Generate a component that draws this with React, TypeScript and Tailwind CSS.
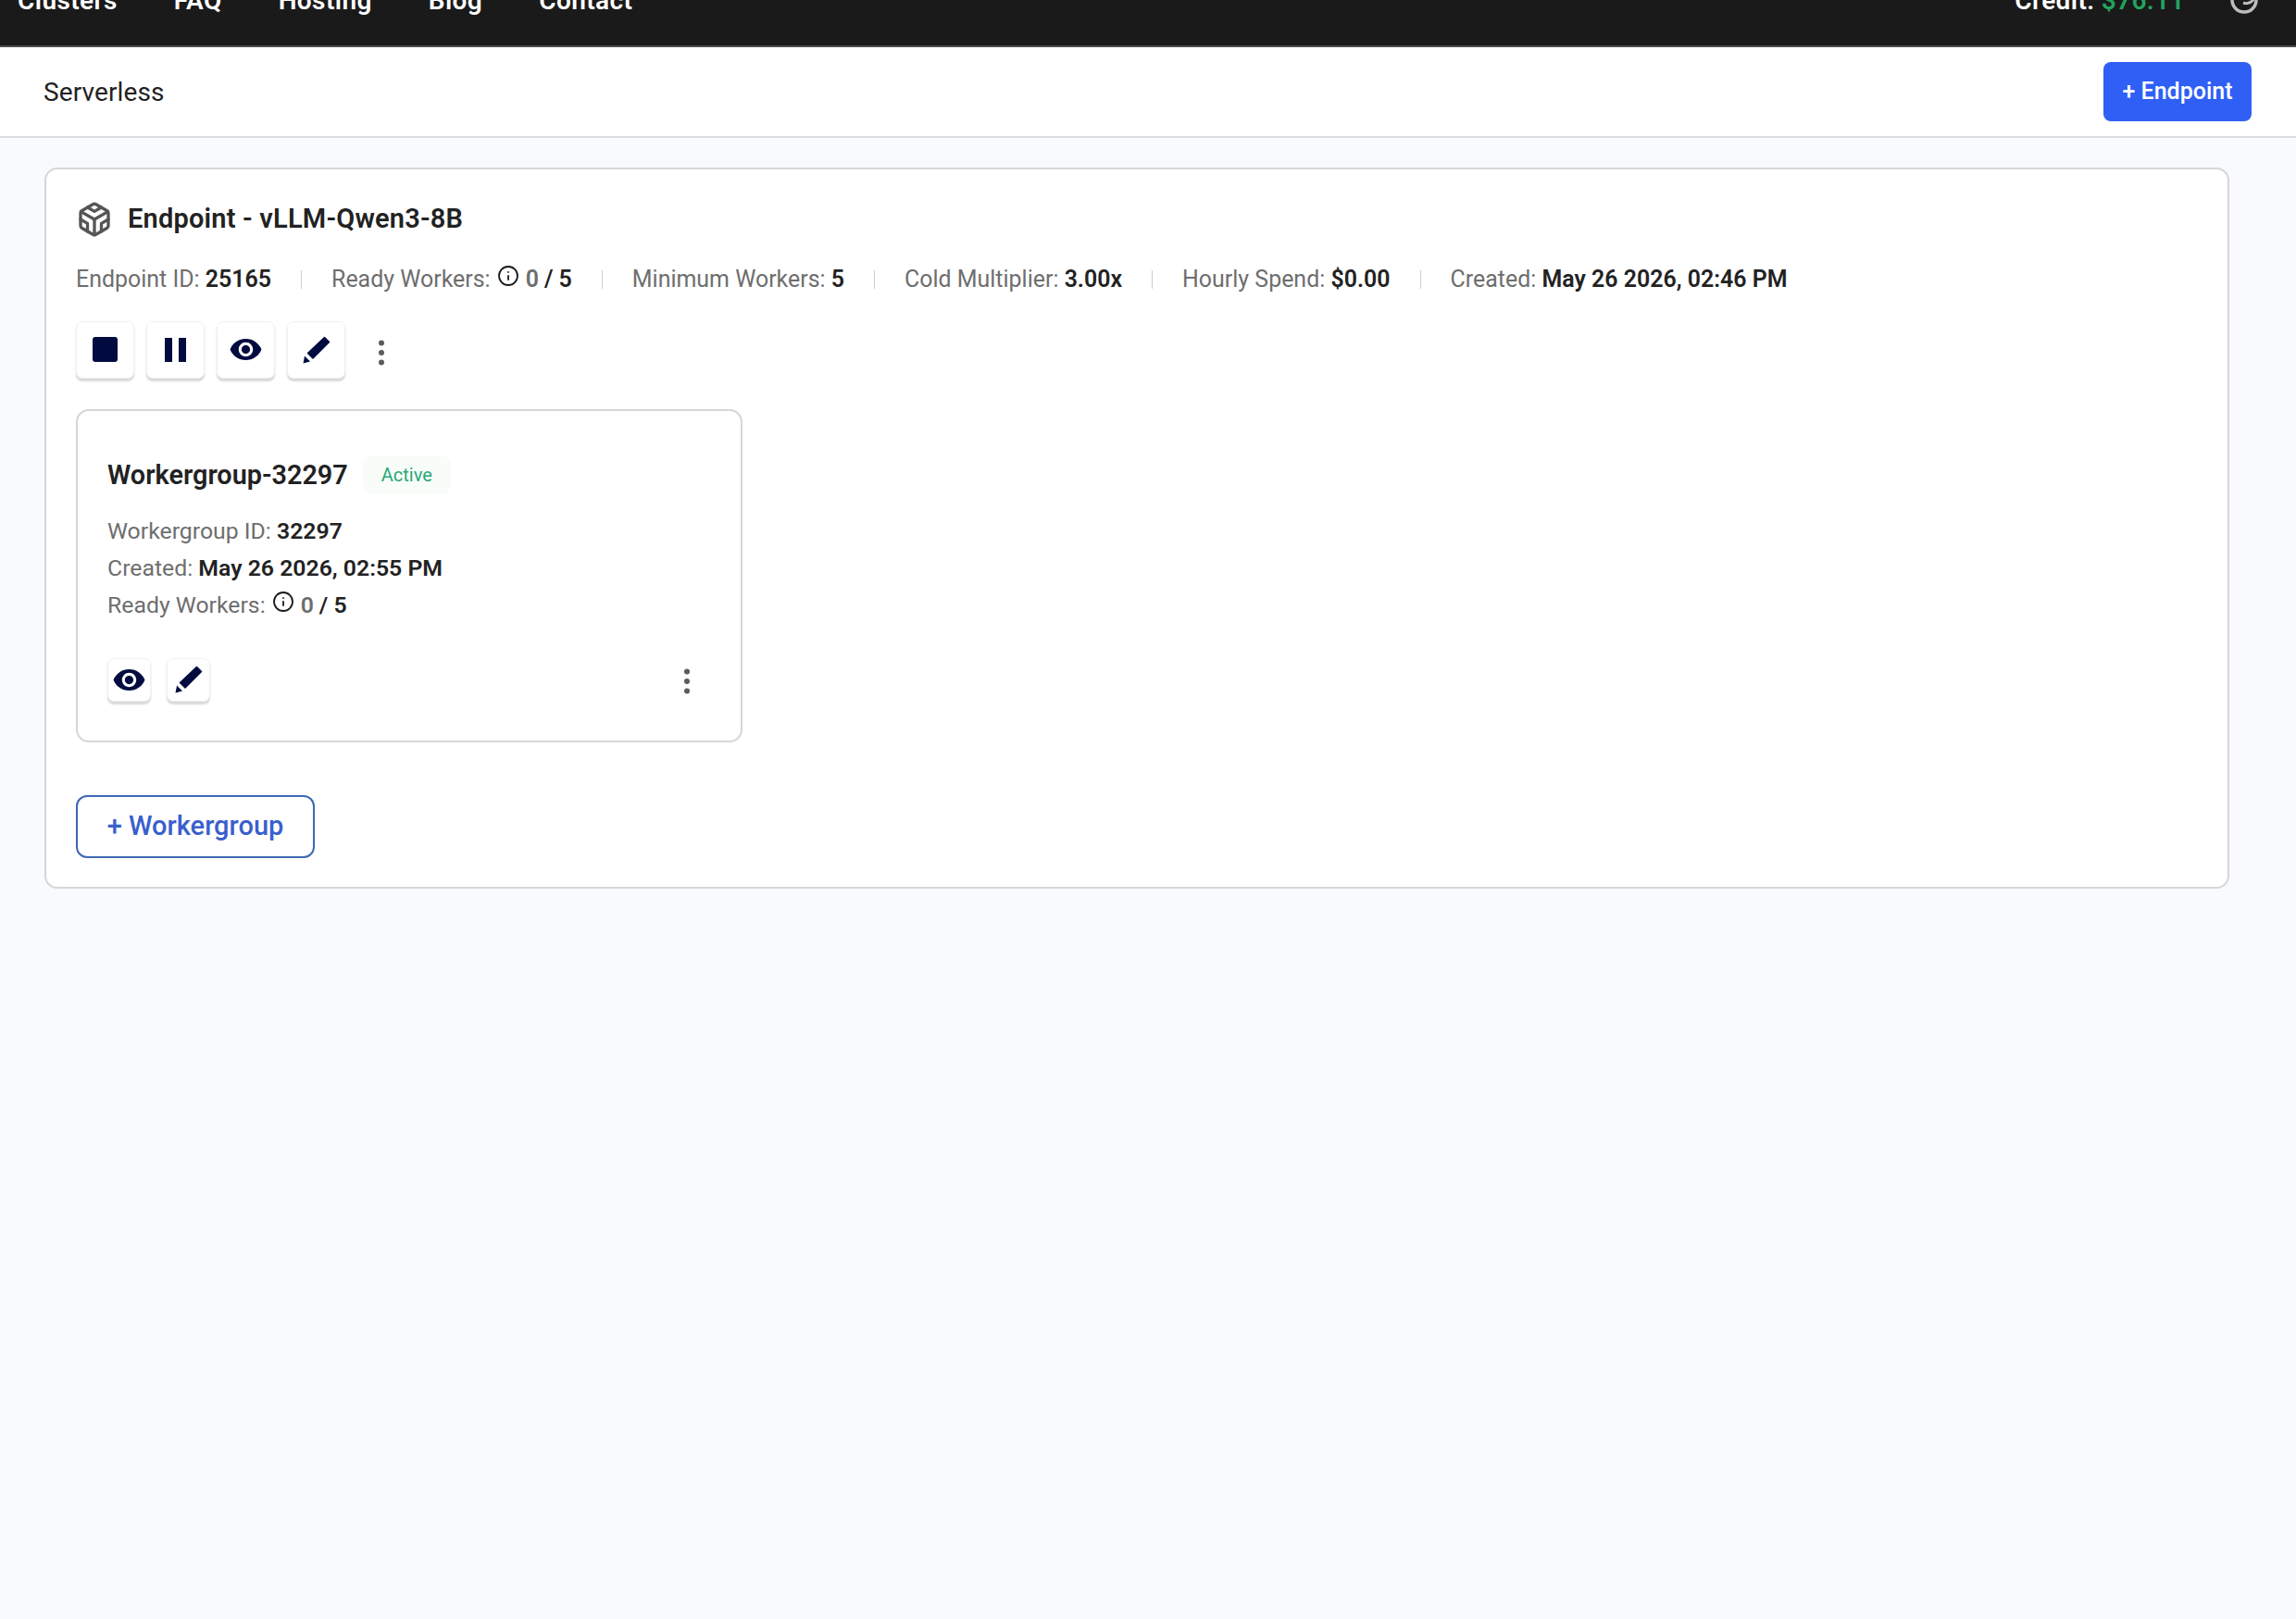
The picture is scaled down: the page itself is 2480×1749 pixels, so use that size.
import { Codesandbox, Info } from "lucide-react";
import { MdVisibility } from "react-icons/md";

const NAV = ["Clusters", "FAQ", "Hosting", "Blog", "Contact"];

function PencilIcon() {
  return (
    <svg width="30" height="30" viewBox="0 0 30 30" aria-hidden="true">
      <path d="M23.5 1.5 L28.5 6.5 L11 24 L5.5 18.5 Z" fill="#020b3f" stroke="#020b3f" strokeWidth="1.5" strokeLinejoin="round" />
      <path d="M2 21.5 L8 27.5 L0.5 29.5 Z" fill="#020b3f" />
    </svg>
  );
}

function Kebab({ className = "" }: { className?: string }) {
  return (
    <svg width="8" height="28" viewBox="0 0 8 28" className={className} aria-hidden="true">
      <circle cx="4" cy="3.5" r="3" fill="#5c5c5c" />
      <circle cx="4" cy="14" r="3" fill="#5c5c5c" />
      <circle cx="4" cy="24.5" r="3" fill="#5c5c5c" />
    </svg>
  );
}

function IconButton({ small, children }: { small?: boolean; children: React.ReactNode }) {
  return (
    <button
      type="button"
      className={`flex items-center justify-center rounded-[7px] border border-[#f0f0f0] bg-white shadow-[0_3px_2px_#d9d9d9] ${
        small ? "h-[47px] w-[47px]" : "h-[62px] w-[63px]"
      }`}
    >
      {children}
    </button>
  );
}

function Stat({ label, value }: { label: string; value: string }) {
  return (
    <span className="text-[#6e6e6e]">
      {label} <b className="font-semibold text-[#222222]">{value}</b>
    </span>
  );
}

function ReadyWorkers() {
  return (
    <span className="flex items-center text-[#6e6e6e]">
      Ready Workers:
      <Info size={24} strokeWidth={1.8} color="#1a1a1a" className="mb-[8px] ml-[7px] mr-[7px]" />
      <b className="font-semibold">0</b>
      <b className="ml-[6px] font-semibold text-[#222222]">/ 5</b>
    </span>
  );
}

export default function App() {
  return (
    <div className="flex min-h-[1749px] flex-col bg-[#f9fafb] font-['Roboto',sans-serif] text-[#222222]">
      <header className="h-[51px] overflow-hidden border-b-2 border-[#4a4a4a] bg-[#1a1a1a]">
        <div className="-mt-[19px] flex h-[40px] items-center justify-between pl-[19px] pr-[41px] text-[28px] font-semibold tracking-[0.4px] text-white">
          <nav className="flex gap-[61px]">
            {NAV.map((item) => (
              <a key={item}>{item}</a>
            ))}
          </nav>
          <div className="flex items-center gap-[49px]">
            <span>
              Credit: <span className="text-[#22a45d]">$76.11</span>
            </span>
            <svg width="30" height="30" viewBox="0 0 30 30" className="-mt-[2px]" aria-hidden="true">
              <circle cx="15" cy="15" r="13" stroke="#bdbdbd" strokeWidth="3.5" fill="none" />
              <path d="M14 18 A 9 9 0 0 0 26 12" stroke="#bdbdbd" strokeWidth="3" fill="none" />
            </svg>
          </div>
        </div>
      </header>

      <div className="flex h-[98px] items-center justify-between border-b-2 border-[#dcdcdc] bg-white pl-[47px] pr-[48px]">
        <h1 className="mt-[2px] text-[28px] font-normal tracking-[0.1px]">Serverless</h1>
        <button
          type="button"
          className="flex h-[64px] w-[160px] items-center justify-center rounded-[8px] bg-[#2f5ff5] text-[25px] font-medium text-white"
        >
          + Endpoint
        </button>
      </div>

      <main className="px-[48px] pt-[32px]">
        <section className="mr-[24px] flex h-[779px] flex-col rounded-[14px] border-2 border-[#d4d6d8] bg-white px-[32px]">
          <div className="mt-[32px] flex items-center gap-[16px]">
            <Codesandbox size={40} strokeWidth={2} color="#555555" />
            <h2 className="text-[29px] font-semibold tracking-[0.2px]">Endpoint - vLLM-Qwen3-8B</h2>
          </div>

          <div className="mt-[25px] flex h-[36px] items-center gap-[32px] text-[24.95px]">
            <Stat label="Endpoint ID:" value="25165" />
            <span className="h-[20px] w-px bg-[#cfcfcf]" />
            <ReadyWorkers />
            <span className="h-[20px] w-px bg-[#cfcfcf]" />
            <Stat label="Minimum Workers:" value="5" />
            <span className="h-[20px] w-px bg-[#cfcfcf]" />
            <Stat label="Cold Multiplier:" value="3.00x" />
            <span className="h-[20px] w-px bg-[#cfcfcf]" />
            <Stat label="Hourly Spend:" value="$0.00" />
            <span className="h-[20px] w-px bg-[#cfcfcf]" />
            <Stat label="Created:" value="May 26 2026, 02:46 PM" />
          </div>

          <div className="mt-[27px] flex items-center gap-[13px]">
            <IconButton>
              <span className="h-[27px] w-[27px] rounded-[3px] bg-[#020b3f]" />
            </IconButton>
            <IconButton>
              <span className="flex gap-[7px]">
                <span className="h-[26px] w-[8px] bg-[#020b3f]" />
                <span className="h-[26px] w-[8px] bg-[#020b3f]" />
              </span>
            </IconButton>
            <IconButton>
              <MdVisibility size={37} color="#020b3f" />
            </IconButton>
            <IconButton>
              <PencilIcon />
            </IconButton>
            <Kebab className="ml-[22px] mt-[6px]" />
          </div>

          <article className="mt-[33px] h-[360px] w-[720px] rounded-[14px] border-2 border-[#d4d6d8] bg-white px-[32px]">
            <div className="mt-[48px] flex items-center">
              <h3 className="text-[28.8px] font-semibold">Workergroup-32297</h3>
              <span className="ml-[16px] rounded-[10px] bg-[#f8fdfa] px-[20px] py-[6px] text-[20px] text-[#2aa877]">Active</span>
            </div>
            <div className="mt-[19px] flex flex-col text-[24.8px] leading-[40px] text-[#6e6e6e]">
              <Stat label="Workergroup ID:" value="32297" />
              <Stat label="Created:" value="May 26 2026, 02:55 PM" />
              <ReadyWorkers />
            </div>
            <div className="mt-[37px] flex items-center justify-between">
              <div className="flex gap-[17px]">
                <IconButton small>
                  <MdVisibility size={37} color="#020b3f" />
                </IconButton>
                <IconButton small>
                  <PencilIcon />
                </IconButton>
              </div>
              <Kebab className="mr-[22px] mt-[4px]" />
            </div>
          </article>

          <button
            type="button"
            className="mt-[57px] flex h-[68px] w-[258px] items-center justify-center rounded-[12px] border-2 border-[#3d68b5] bg-white text-[29px] font-medium text-[#3a5fcd]"
          >
            + Workergroup
          </button>
        </section>
      </main>
    </div>
  );
}
